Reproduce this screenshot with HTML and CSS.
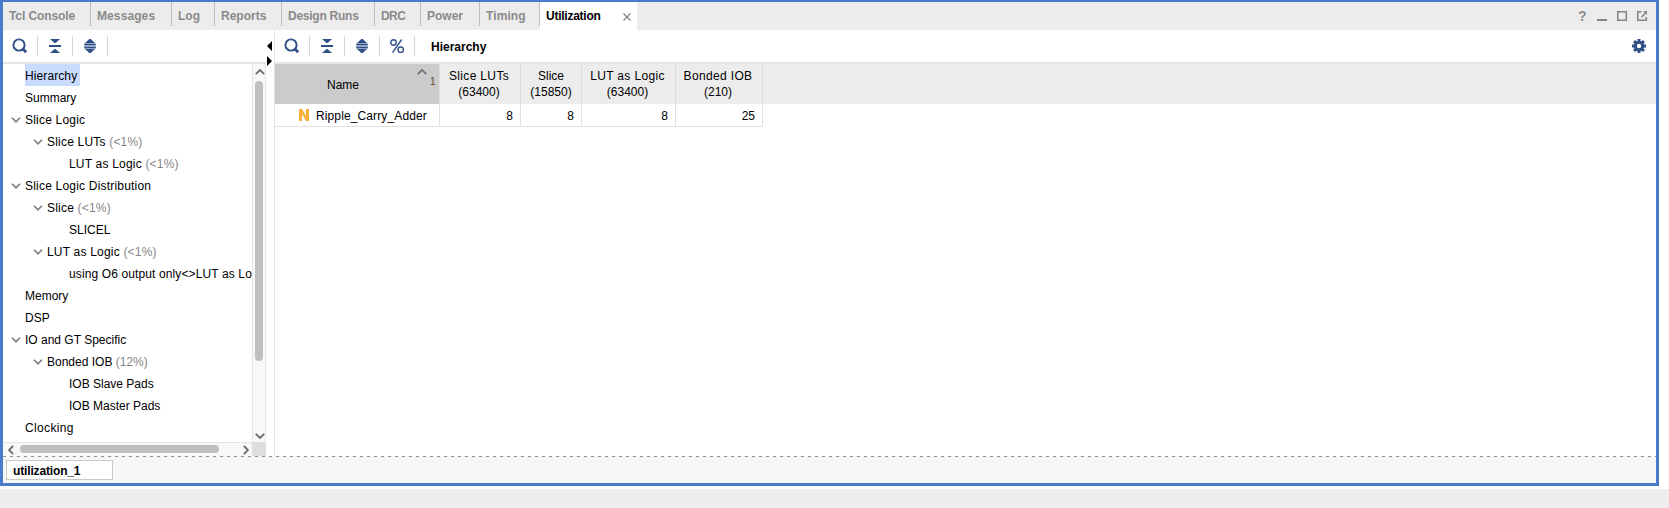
FILE: index.html
```html
<!DOCTYPE html>
<html lang="en">
<head>
<meta charset="utf-8">
<title>Utilization</title>
<link rel="stylesheet" href="styles.css">
</head>
<body>
<svg class="defs" width="0" height="0">
  <symbol id="search" viewBox="0 0 16 16"><circle cx="7" cy="7" r="5.600" fill="none" stroke="#2f4f87" stroke-width="1.900"/><path d="M10.800 10.800L14.200 14.200" stroke="#2f4f87" stroke-width="2.800"/></symbol>
  <symbol id="collapse" viewBox="0 0 16 16"><path d="M3 1h10L8.500 5h-1zM3 15h10L8.500 11h-1zM2 7h12v2H2z" fill="#2f4f87"/></symbol>
  <symbol id="expand" viewBox="0 0 16 16"><path d="M7.300 1h1.400L13 5H3zM7.300 15h1.400L13 11H3zM2.200 5.600h11.600v1.800H2.200zM2.200 8.600h11.600v1.800H2.200z" fill="#2f4f87"/></symbol>
  <symbol id="chev" viewBox="0 0 10 6"><path d="M1 .8l4 4 4-4" fill="none" stroke="#7b7b7b" stroke-width="1.600"/></symbol>
</svg>
<div class="window">
  <div class="tabs">
    <div class="tab t1"><span>Tcl Console</span></div>
    <div class="tab t2"><span>Messages</span></div>
    <div class="tab t3"><span>Log</span></div>
    <div class="tab t4"><span>Reports</span></div>
    <div class="tab t5"><span>Design Runs</span></div>
    <div class="tab t6"><span>DRC</span></div>
    <div class="tab t7"><span>Power</span></div>
    <div class="tab t8"><span>Timing</span></div>
    <div class="tab active"><span>Utilization</span><svg width="8" height="8" viewBox="0 0 8 8"><path d="M.5 .5l7 7M7.500 .5l-7 7" stroke="#868686" stroke-width="1.300"/></svg></div>
    <div class="controls">
      <b>?</b>
      <svg width="66" height="12" viewBox="0 0 66 12"><g fill="none" stroke="#868686"><path d="M0 10h10" stroke-width="2"/><path d="M20.800 1.800h8.500v8.500h-8.500z" stroke-width="1.600"/><path d="M44.500 1.800h-3.700v8.500h8.500V7M44.500 7l4-4" stroke-width="1.600"/></g><path d="M46 1h4v4z" fill="#868686"/></svg>
    </div>
  </div>
  <div class="main">
    <div class="left">
      <div class="toolbar">
        <div class="tool"><svg><use href="#search"/></svg></div>
        <div class="tool"><svg><use href="#collapse"/></svg></div>
        <div class="tool"><svg><use href="#expand"/></svg></div>
      </div>
      <div class="treewrap">
        <div class="tree">
          <div class="row l0"><i></i><span class="sel">Hierarchy</span></div>
          <div class="row l0"><i></i><span>Summary</span></div>
          <div class="row l0"><i><svg><use href="#chev"/></svg></i><span class="w2">Slice Logic</span></div>
          <div class="row l1"><i><svg><use href="#chev"/></svg></i><span class="w2">Slice LUTs <em>(&lt;1%)</em></span></div>
          <div class="row l2"><i></i><span class="w2">LUT as Logic <em>(&lt;1%)</em></span></div>
          <div class="row l0"><i><svg><use href="#chev"/></svg></i><span class="w2">Slice Logic Distribution</span></div>
          <div class="row l1"><i><svg><use href="#chev"/></svg></i><span class="w2">Slice <em>(&lt;1%)</em></span></div>
          <div class="row l2"><i></i><span>SLICEL</span></div>
          <div class="row l1"><i><svg><use href="#chev"/></svg></i><span class="w2">LUT as Logic <em>(&lt;1%)</em></span></div>
          <div class="row l2"><i></i><span class="w1">using O6 output only&lt;&gt;LUT as Lo</span></div>
          <div class="row l0"><i></i><span>Memory</span></div>
          <div class="row l0"><i></i><span>DSP</span></div>
          <div class="row l0"><i><svg><use href="#chev"/></svg></i><span>IO and GT Specific</span></div>
          <div class="row l1"><i><svg><use href="#chev"/></svg></i><span>Bonded IOB <em>(12%)</em></span></div>
          <div class="row l2"><i></i><span>IOB Slave Pads</span></div>
          <div class="row l2"><i></i><span>IOB Master Pads</span></div>
          <div class="row l0"><i></i><span class="w5">Clocking</span></div>
        </div>
        <div class="vscroll">
          <svg width="10" height="6" viewBox="0 0 10 6"><path d="M.8 5.200L5 1l4.200 4.200" fill="none" stroke="#6e6e6e" stroke-width="1.900"/></svg>
          <div class="vthumb"></div>
          <svg class="down" width="10" height="6" viewBox="0 0 10 6"><path d="M.8 .8L5 5 9.200 .8" fill="none" stroke="#6e6e6e" stroke-width="1.900"/></svg>
        </div>
        <div class="hscroll">
          <svg width="6" height="10" viewBox="0 0 6 10"><path d="M5.200 .8L1 5l4.200 4.200" fill="none" stroke="#6e6e6e" stroke-width="1.900"/></svg>
          <div class="hthumb"></div>
          <svg class="rightarrow" width="6" height="10" viewBox="0 0 6 10"><path d="M.8 .8L5 5 .8 9.200" fill="none" stroke="#6e6e6e" stroke-width="1.900"/></svg>
        </div>
        <div class="corner"></div>
      </div>
    </div>
    <div class="splitter"><svg width="6" height="25" viewBox="0 0 6 25"><path d="M5 0v10L0 5zM0 15v10l5-5z" fill="#000"/></svg></div>
    <div class="right">
      <div class="toolbar">
        <div class="tool"><svg><use href="#search"/></svg></div>
        <div class="tool"><svg><use href="#collapse"/></svg></div>
        <div class="tool"><svg><use href="#expand"/></svg></div>
        <div class="tool"><svg viewBox="0 0 16 16"><g fill="none" stroke="#2f4f87" stroke-width="1.400"><circle cx="4.500" cy="4.500" r="2.700"/><circle cx="11.700" cy="11.700" r="2.700"/><path d="M12.700 1.500l-9.200 13.200"/></g></svg></div>
        <div class="title">Hierarchy</div>
        <svg class="gear" width="14" height="14" viewBox="-7 -7 14 14"><g fill="#2f4f87"><path id="tooth" d="M-1.500-7h3v14h-3z"/><use href="#tooth" transform="rotate(45)"/><use href="#tooth" transform="rotate(90)"/><use href="#tooth" transform="rotate(135)"/><circle r="5.200"/></g><circle r="2.200" fill="#fff"/></svg>
      </div>
      <div class="thead">
        <div class="c1">Name<span class="sort"><svg width="10" height="6" viewBox="0 0 10 6"><path d="M.8 5.200L5 1l4.200 4.200" fill="none" stroke="#6e6e6e" stroke-width="1.700"/></svg><small>1</small></span></div>
        <div class="c2"><span class="w5">Slice LUTs</span><br>(63400)</div>
        <div class="c3">Slice<br>(15850)</div>
        <div class="c4"><span class="w5">LUT as Logic</span><br>(63400)</div>
        <div class="c5"><span class="w5">Bonded IOB</span><br>(210)</div>
      </div>
      <div class="trow">
        <div class="c1"><svg width="10" height="12" viewBox="0 0 10 12"><path d="M0 0h3l4 7V0h3v12H7L3 5v7H0z" fill="#f9ae3b"/></svg><span class="w1">Ripple_Carry_Adder</span></div>
        <div class="c2">8</div>
        <div class="c3">8</div>
        <div class="c4">8</div>
        <div class="c5">25</div>
      </div>
    </div>
  </div>
  <div class="bottom"><div class="btab">utilization_1</div></div>
</div>
</body>
</html>
```

FILE: styles.css
```css
* { box-sizing: border-box; }
body { margin: 0; width: 1669px; height: 508px; overflow: hidden; background: linear-gradient(#fff 489px, #eee 489px); font: 12px/16px "Liberation Sans", Arial, sans-serif; color: #000; }
svg { display: block; flex: none; }
.defs { position: absolute; }
.window { width: 1659px; height: 486px; border: 3px solid #4a7bcb; border-top-width: 2px; background: #fff; display: flex; flex-direction: column; }
.tabs { height: 28px; background: #ececec; display: flex; font-weight: bold; color: #8a8a8a; flex: none; }
.tab { height: 24px; border-right: 1px solid #bdbdbd; padding: 6px 0 0 6px; white-space: nowrap; }
.t1 { width: 88px; letter-spacing: -0.1px; }
.t2 { width: 81px; letter-spacing: 0.1px; }
.t3 { width: 43px; }
.t4 { width: 67px; }
.t5 { width: 93px; letter-spacing: -0.25px; }
.t6 { width: 46px; letter-spacing: -0.6px; }
.t7 { width: 59px; }
.t8 { width: 60px; letter-spacing: 0.1px; }
.active { width: 97px; height: 28px; background: #fff; color: #000; border: 0; display: flex; justify-content: space-between; padding-right: 6px; letter-spacing: -0.25px; }
.active svg { margin-top: 5px; }
.controls { margin-left: auto; display: flex; padding: 6px 0 0; }
.controls b { width: 19px; font-size: 14px; }
.controls svg { margin-top: 2px; margin-right: -7px; }
.main { height: 426px; display: flex; flex: none; }
.left { width: 263px; flex: none; }
.toolbar { height: 34px; border-bottom: 2px solid #e6e6e6; display: flex; }
.tool { width: 35px; height: 20px; margin-top: 6px; border-right: 1px solid #d5d5d5; padding: 2px 0 0 9px; }
.tool svg { width: 16px; height: 16px; }
.treewrap { display: grid; grid-template: 378px 14px / 249px 14px; }
.tree { overflow: hidden; }
.row { height: 22px; display: flex; line-height: 24px; white-space: pre; }
.row i { width: 14px; flex: none; padding-top: 9px; }
.row i svg { width: 10px; height: 6px; }
.row em { font-style: normal; color: #868686; }
.l0 { padding-left: 8px; }
.l1 { padding-left: 30px; }
.l2 { padding-left: 52px; }
.w1 { letter-spacing: 0.12px; }
.w2 { letter-spacing: 0.2px; }
.w5 { letter-spacing: 0.35px; }
.sel { background: #c9dcff; width: 55px; height: 22px; letter-spacing: 0.1px; }
.vscroll { border: 1px solid #e5e5e5; border-width: 0 1px; background: #f8f8f8; padding: 5px 0 3px 2px; display: flex; flex-direction: column; }
.vthumb { width: 8px; height: 280px; margin-top: 6px; border-radius: 4px; background: #bfbfbf; }
.down { margin-top: auto; }
.hscroll { border-top: 1px solid #e5e5e5; background: #f8f8f8; display: flex; padding: 2px 3px 0 5px; }
.hthumb { width: 199px; height: 8px; margin-left: 6px; border-radius: 4px; background: #bfbfbf; }
.rightarrow { margin-left: auto; }
.corner { background: #dedede; }
.splitter { width: 9px; border-right: 1px solid #e5e5e5; padding: 11px 0 0 1px; flex: none; }
.right { flex: 1; }
.title { font-weight: bold; margin: 9px 0 0 16px; }
.gear { margin: 9px 10px 0 auto; }
.thead { height: 40px; background: #ececec; display: flex; text-align: center; }
.thead > div { border-right: 1px solid #dcdcdc; padding: 4px 2px 0 0; }
.thead .c3 { padding-right: 0; }
.thead .c1 { background: #cbcbcb; position: relative; padding: 13px 28px 0 0; }
.sort { position: absolute; left: 142px; top: 5px; }
.sort small { position: absolute; left: 13px; top: 5px; font-size: 10px; color: #6b4424; }
.c1 { width: 165px; }
.c2 { width: 81px; }
.c3 { width: 61px; }
.c4 { width: 94px; }
.c5 { width: 87px; }
.trow { display: flex; height: 23px; width: 488px; border-bottom: 1px solid #e0e0e0; line-height: 24px; text-align: right; }
.trow > div { border-right: 1px solid #e0e0e0; padding-right: 7px; }
.trow .c1 { display: flex; padding: 0 0 0 24px; }
.trow .c1 svg { margin: 5px 7px 0 0; }
.bottom { height: 27px; background: #f7f7f7; padding: 4px 0 0 3px; background-image: repeating-linear-gradient(90deg, #909090 0 3px, #f7f7f7 3px 7px); background-size: 100% 1px; background-repeat: no-repeat; }
.btab { width: 107px; height: 20px; border: 1px solid #c9c9c9; background: #fff; padding: 2px 0 0 6px; font-weight: bold; letter-spacing: -0.15px; }
```
